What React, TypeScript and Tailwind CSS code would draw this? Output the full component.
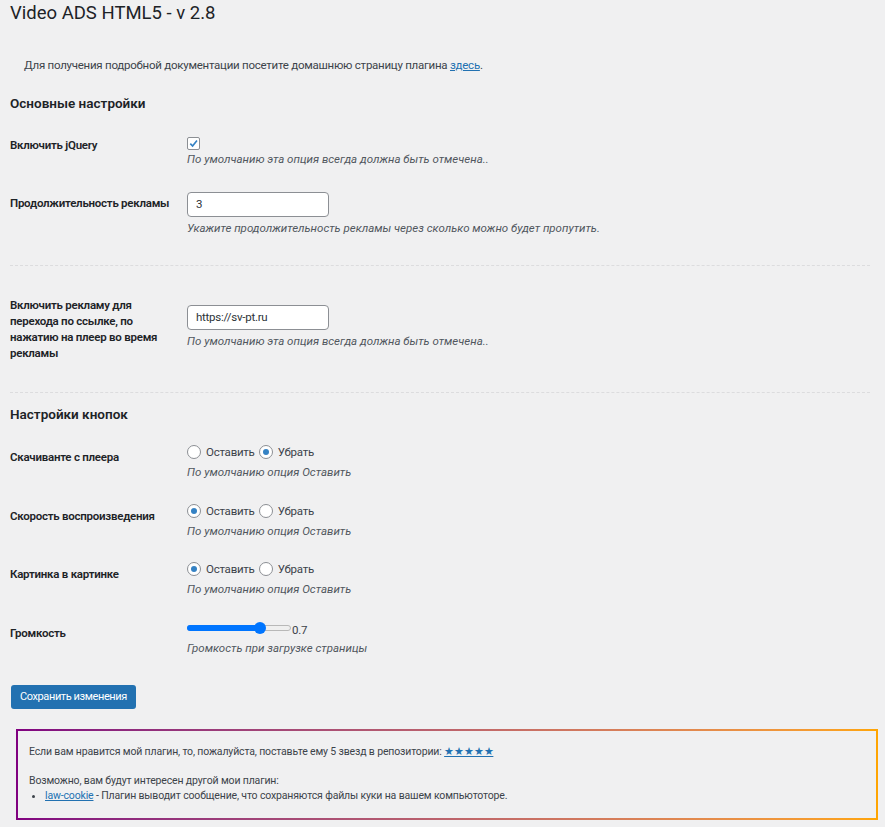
const body = "text-[11.5px] tracking-[-0.25px]";
const desc = "text-[11.5px] italic text-[#50575e] leading-[18px]";
const label = `w-[177px] shrink-0 ${body} font-semibold text-[#1d2327] leading-[16px]`;

function Radio({ checked }: { checked?: boolean }) {
  return (
    <span className="flex h-[14px] w-[14px] items-center justify-center rounded-full border border-[#8c8f94] bg-white">
      {checked && <span className="h-[6px] w-[6px] rounded-full bg-[#3582c4]" />}
    </span>
  );
}

function RadioRow({ title, keep }: { title: string; keep: boolean }) {
  return (
    <div className="flex items-start">
      <div className={`${label} pt-[6px]`}>{title}</div>
      <div>
        <div className={`flex items-center ${body} leading-[18px] text-[#3c434a]`}>
          <Radio checked={keep} />
          <span className="ml-[5px] mr-[4px]">Оставить</span>
          <Radio checked={!keep} />
          <span className="ml-[5px]">Убрать</span>
        </div>
        <div className={`${desc} mt-[2px]`}>По умолчанию опция Оставить</div>
      </div>
    </div>
  );
}

function Volume({ value }: { value: number }) {
  return (
    <div className="flex h-[18px] items-center">
      <div className="relative h-[14px] w-[104px]">
        <div className="absolute left-0 right-0 top-[4px] h-[6px] rounded-full border border-[#b8b8b8] bg-[#efefef]" />
        <div
          className="absolute left-0 top-[4px] h-[6px] rounded-full bg-[#0075ff]"
          style={{ width: `${value * 100}%` }}
        />
        <div
          className="absolute top-[1px] h-[12px] w-[12px] -translate-x-1/2 rounded-full bg-[#0075ff]"
          style={{ left: `${value * 100}%` }}
        />
      </div>
      <span className={`ml-[1px] mt-[5px] ${body} leading-[18px] text-[#3c434a]`}>{value}</span>
    </div>
  );
}

export default function App() {
  return (
    <div
      className="min-h-[827px] bg-[#f0f0f1] text-[#3c434a]"
      style={{ fontFamily: 'Roboto, "Noto Sans", sans-serif' }}
    >
      <div className="pl-[10px] pr-[15px]">
        <h1 className="text-[18.5px] font-normal leading-[26px] text-[#1d2327]">Video ADS HTML5 - v 2.8</h1>

        <p className={`mt-[30px] pl-[14px] ${body} leading-[18px] text-[#3c434a]`}>
          Для получения подробной документации посетите домашнюю страницу плагина{" "}
          <a className="text-[#2271b1] underline">здесь</a>.
        </p>

        <h2 className="mt-[19px] text-[13.5px] font-semibold leading-[20px] text-[#1d2327]">Основные настройки</h2>

        <div className="mt-[24px] flex items-start">
          <div className={label}>Включить jQuery</div>
          <div>
            <span className="flex h-[13px] w-[13px] items-center justify-center rounded-[2px] border border-[#8c8f94] bg-white">
              <svg viewBox="0 0 12 12" className="h-[11px] w-[11px]">
                <path d="M2.5 6.2 L5 8.7 L9.8 2.8" fill="none" stroke="#3582c4" strokeWidth="1.8" />
              </svg>
            </span>
            <div className={desc}>По умолчанию эта опция всегда должна быть отмечена..</div>
          </div>
        </div>

        <div className="mt-[24px] flex items-start">
          <div className={`${label} pt-[3px]`}>Продолжительность рекламы</div>
          <div>
            <div className={`flex h-[25px] w-[142px] items-center rounded-[4px] border border-[#8c8f94] bg-white px-[8px] ${body} text-[#2c3338]`}>
              3
            </div>
            <div className={`${desc} mt-[2px]`}>Укажите продолжительность рекламы через сколько можно будет пропутить.</div>
          </div>
        </div>

        <div className="mt-[28px] border-t border-dashed border-[#dcdcde]" />

        <div className="mt-[31px] flex items-start">
          <div className={`${label} pr-[17px] leading-[15px]`}>
            Включить рекламу для перехода по ссылке, по нажатию на плеер во время рекламы
          </div>
          <div className="pt-[8px]">
            <div className={`flex h-[25px] w-[142px] items-center rounded-[4px] border border-[#8c8f94] bg-white px-[8px] ${body} text-[#2c3338]`}>
              https://sv-pt.ru
            </div>
            <div className={`${desc} mt-[2px]`}>По умолчанию эта опция всегда должна быть отмечена..</div>
          </div>
        </div>

        <div className="mt-[31px] border-t border-dashed border-[#dcdcde]" />

        <h2 className="mt-[11px] text-[13.5px] font-semibold leading-[20px] text-[#1d2327]">Настройки кнопок</h2>

        <div className="mt-[19px] flex flex-col gap-[20.5px]">
          <RadioRow title="Скачиванте с плеера" keep={false} />
          <RadioRow title="Скорость воспроизведения" keep />
          <RadioRow title="Картинка в картинке" keep />
          <div className="flex items-start">
            <div className={`${label} pt-[6px]`}>Громкость</div>
            <div>
              <Volume value={0.7} />
              <div className={`${desc} mt-[2px]`}>Громкость при загрузке страницы</div>
            </div>
          </div>
        </div>

        <button className="ml-[1px] mt-[28px] h-[24px] rounded-[3px] bg-[#2271b1] px-[9px] text-[11px] leading-[22px] tracking-[-0.4px] text-white">
          Сохранить изменения
        </button>
      </div>

      <div className="ml-[16px] mr-[7px] mt-[20px] bg-gradient-to-r from-[#800080] to-[#ffa500] p-[2px]">
        <div className="bg-[#f0f0f1] px-[11px] pb-[15px] pt-[13px] text-[10.5px] leading-[15px] tracking-[-0.15px] text-[#3c434a]">
          <p>
            Если вам нравится мой плагин, то, пожалуйста, поставьте ему 5 звезд в репозитории:{" "}
            <a className="text-[#2271b1] underline">★★★★★</a>
          </p>
          <p className="mt-[14px]">Возможно, вам будут интересен другой мои плагин:</p>
          <ul className="list-disc pl-[16px]">
            <li>
              <a className="text-[#2271b1] underline">law-cookie</a> - Плагин выводит сообщение, что сохраняются файлы
              куки на вашем компьютоторе.
            </li>
          </ul>
        </div>
      </div>
    </div>
  );
}
